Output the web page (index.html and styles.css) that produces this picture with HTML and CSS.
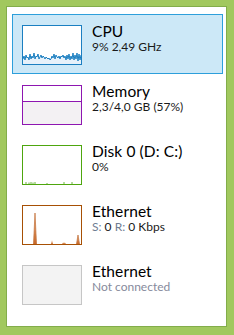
FILE: index.html
```html
<!DOCTYPE html>
<html>
<head>
<meta charset="utf-8">
<link rel="stylesheet" href="styles.css">
</head>
<body>
<div class="window">
  <div class="list">
    <div class="item selected">
      <div class="graph g-cpu">
        <svg viewBox="0 0 58 38" width="58" height="38">
          <polygon class="cpu-fill" points="0,38 0,33 1,30 2,34 3,29 4,32 5,31 6,34 7,28 8,33 9,30 10,32 11,27 12,33 13,30 14,31 15,28 16,33 17,31 18,29 19,32 20,30 21,31 22,33 23,31 24,32 25,33 26,32 27,34 28,33 29,30 30,32 31,28 32,33 33,29 34,31 35,32 36,30 37,33 38,30 39,31 40,29 41,32 42,30 43,34 44,29 45,33 46,28 47,34 48,30 49,33 50,27 51,34 52,29 53,33 54,27 55,35 56,28 57,34 58,29 58,38"/>
          <polyline class="cpu-line" points="0,33 1,30 2,34 3,29 4,32 5,31 6,34 7,28 8,33 9,30 10,32 11,27 12,33 13,30 14,31 15,28 16,33 17,31 18,29 19,32 20,30 21,31 22,33 23,31 24,32 25,33 26,32 27,34 28,33 29,30 30,32 31,28 32,33 33,29 34,31 35,32 36,30 37,33 38,30 39,31 40,29 41,32 42,30 43,34 44,29 45,33 46,28 47,34 48,30 49,33 50,27 51,34 52,29 53,33 54,27 55,35 56,28 57,34 58,29"/>
        </svg>
      </div>
      <div class="info">
        <div class="title">CPU</div>
        <div class="sub">9% 2,49 GHz</div>
      </div>
    </div>
    <div class="item">
      <div class="graph g-mem">
        <div class="mem-free"></div>
        <div class="mem-used"></div>
      </div>
      <div class="info">
        <div class="title">Memory</div>
        <div class="sub">2,3/4,0 GB (57%)</div>
      </div>
    </div>
    <div class="item">
      <div class="graph g-disk">
        <svg viewBox="0 0 58 38" width="58" height="38">
          <path class="disk-ticks" d="M3 36v2M6 36.5v1.5M8 36v2M10 36.5v1.5M12 36v2M24 37v1M41 36v2M49 36v2"/>
        </svg>
      </div>
      <div class="info">
        <div class="title">Disk 0 (D: C:)</div>
        <div class="sub">0%</div>
      </div>
    </div>
    <div class="item">
      <div class="graph g-eth">
        <svg viewBox="0 0 58 38" width="58" height="38">
          <defs>
            <linearGradient id="eg" x1="0" y1="0" x2="0" y2="1">
              <stop offset="0" stop-color="#f3c9a8"/>
              <stop offset="1" stop-color="#c8692a"/>
            </linearGradient>
          </defs>
          <polygon fill="url(#eg)" points="10.5,38 12,7 13.5,38"/>
          <polyline class="eth-line" points="10.5,38 12,7 13.5,38"/>
          <polygon fill="url(#eg)" points="28,38 29,34 30,38"/>
          <polygon fill="url(#eg)" points="39,38 40,36.5 42,36.5 43,38"/>
          <polygon fill="url(#eg)" points="53.5,38 55,29 56.5,38"/>
          <polyline class="eth-line" points="53.5,38 55,29 56.5,38"/>
        </svg>
      </div>
      <div class="info">
        <div class="title">Ethernet</div>
        <div class="sub"><span class="lbl">S:</span> 0 <span class="lbl">R:</span> 0 Kbps</div>
      </div>
    </div>
    <div class="item">
      <div class="graph g-off"></div>
      <div class="info">
        <div class="title">Ethernet</div>
        <div class="sub muted">Not connected</div>
      </div>
    </div>
  </div>
</div>
</body>
</html>
```

FILE: styles.css
```css
* { box-sizing: border-box; }
html, body { margin: 0; padding: 0; }
body {
  width: 234px;
  height: 335px;
  background: #a1c85e;
  padding: 6px 0 0 6px;
  font-family: Lato, "Noto Sans", sans-serif;
  overflow: hidden;
}
.window {
  width: 221px;
  height: 321px;
  background: #fff;
  border: 1px solid #82ad4a;
}
.list {
  display: flex;
  flex-direction: column;
  padding: 7px 3px 0 5px;
}
.item {
  display: flex;
  align-items: flex-start;
  height: 60px;
  border: 1px solid transparent;
  padding: 10px 0 0 9px;
  gap: 10px;
}
.item.selected {
  background: #cce8f7;
  border-color: #2d9fdb;
}
.graph {
  width: 60px;
  height: 40px;
  border: 1px solid #ccc;
  background: #fff;
  flex: none;
  display: flex;
  flex-direction: column;
}
.graph svg { display: block; }
.g-cpu { border-color: #1b7fc1; }
.cpu-fill { fill: #e6f1fa; }
.cpu-line { fill: none; stroke: #1b7fc1; stroke-width: 1; }
.g-mem { border-color: #8e16b1; }
.mem-free { height: 16px; border-bottom: 1px solid #8e16b1; }
.mem-used { flex: 1; background: #f3f1f3; }
.g-disk { border-color: #4ea60e; }
.disk-ticks { stroke: #6cb43c; stroke-width: 1; }
.g-eth { border-color: #a75005; }
.eth-line { fill: none; stroke: #b8591a; stroke-width: 0.6; }
.g-off { border-color: #c6c6c6; background: #f3f3f3; }
.info {
  margin-top: -1.5px;
  display: flex;
  flex-direction: column;
}
.title {
  font-size: 15.5px;
  line-height: 15px;
  color: #000;
  letter-spacing: 0.1px;
}
.sub {
  font-size: 12px;
  line-height: 15px;
  color: #1a1a1a;
}
.lbl { color: #6f7d92; }
.muted { color: #868a9c; }
```
